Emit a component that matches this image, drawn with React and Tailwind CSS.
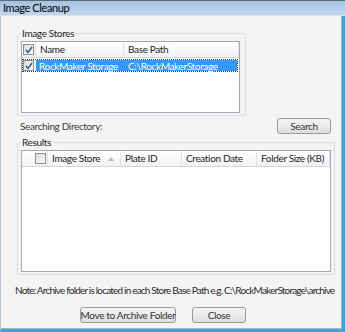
function CheckBox({ checked = false }) {
  return (
    <span className="flex h-[11px] w-[11px] shrink-0 items-center justify-center border border-[#8e8f8f] bg-gradient-to-br from-[#dcdcdc] to-[#fbfbfb]">
      {checked && (
        <svg width="8" height="8" viewBox="0 0 8 8">
          <path d="M1 4 L3 6.5 L7 1" fill="none" stroke="#3e5b96" strokeWidth="1.6" />
        </svg>
      )}
    </span>
  );
}

function HeaderCell({ width, children, last = false }) {
  return (
    <div
      className={`flex h-full items-center whitespace-nowrap pl-[4px] ${last ? '' : 'border-r border-[#dfe2e6]'}`}
      style={{ width }}
    >
      {children}
    </div>
  );
}

function Group({ label, className, children }) {
  return (
    <div className={`relative rounded-[3px] border border-[#d5dfe5] ${className}`}>
      <span className="absolute -top-[7px] left-[3px] bg-[#f4f4f4] px-[1px] leading-[12px]">
        {label}
      </span>
      {children}
    </div>
  );
}

function Button({ width, children }) {
  return (
    <button
      type="button"
      className="flex h-[16px] items-center justify-center whitespace-nowrap rounded-[3px] border border-[#9a9a9a] bg-gradient-to-b from-[#f4f4f4] via-[#ececec] to-[#dcdcdc] leading-[12px] text-[#333]"
      style={{ width }}
    >
      {children}
    </button>
  );
}

export default function App() {
  return (
    <div className="flex h-[332px] w-[345px] flex-col overflow-hidden border-t border-[#5f6a74] bg-[#f4f4f4] font-[Lato,sans-serif] text-[10px] tracking-[-0.35px] text-[#1e1e1e]">
      {/* Title bar */}
      <div className="flex h-[15px] shrink-0 items-center border-b border-[#d6e4f3] bg-gradient-to-b from-[#a5c2e2] to-[#c2d6ec] pl-[3px] text-[11px] tracking-[-0.4px] text-black">
        Image Cleanup
      </div>

      {/* Window body */}
      <div className="flex flex-1 border-b-[3px] border-l border-r-[3px] border-b-[#3aa4d6] border-l-[#b4c4d6] border-r-[#3aa4d6]">
        <div className="flex flex-1 flex-col border-b border-r border-[#a9b4bf]">
          {/* Image Stores */}
          <Group label="Image Stores" className="ml-[16px] mt-[17px] h-[83px] w-[229px]">
            <div className="ml-[3px] mt-[7px] flex h-[72px] w-[219px] flex-col border border-[#a3a9b1] bg-white">
              <div className="flex h-[16px] shrink-0 items-center border-b border-[#d5d5d5] bg-gradient-to-b from-white to-[#f1f2f4]">
                <div className="flex h-full w-[14px] items-center border-r border-[#dfe2e6] pl-[1px]">
                  <CheckBox checked />
                </div>
                <HeaderCell width={88}>Name</HeaderCell>
                <HeaderCell width={115}>Base Path</HeaderCell>
              </div>
              <div className="mt-[1px] flex h-[13px] w-[216px] items-center border border-dotted border-[#3a3a3a]">
                <div className="flex h-full w-[13px] items-center bg-white">
                  <CheckBox checked />
                </div>
                <div className="flex h-full flex-1 items-center whitespace-nowrap bg-[#3399ff] text-white">
                  <span className="w-[89px] pl-[3px] leading-[12px]">RockMaker Storage</span>
                  <span className="pl-[3px] leading-[12px]">C:\RockMakerStorage</span>
                </div>
              </div>
            </div>
          </Group>

          {/* Searching directory */}
          <div className="ml-[19px] mt-[2px] flex h-[16px] w-[311px] items-center justify-between">
            <span className="leading-[12px] text-[#3b3b3b]">Searching Directory:</span>
            <Button width={54}>Search</Button>
          </div>

          {/* Results */}
          <Group label="Results" className="ml-[16px] mt-[8px] h-[133px] w-[318px]">
            <div className="ml-[3px] mt-[7px] flex h-[122px] w-[310px] flex-col border border-[#a3a9b1] bg-white">
              <div className="flex h-[16px] shrink-0 items-center border-b border-[#d5d5d5] bg-gradient-to-b from-white to-[#f1f2f4]">
                <div className="flex h-full w-[26px] items-center border-r border-[#dfe2e6] pl-[13px]">
                  <CheckBox />
                </div>
                <HeaderCell width={73}>
                  <span className="flex-1">Image Store</span>
                  <svg width="6" height="4" viewBox="0 0 6 4" className="mr-[6px]">
                    <path d="M0 4 L3 0 L6 4 Z" fill="#b4bac2" />
                  </svg>
                </HeaderCell>
                <HeaderCell width={61}>Plate ID</HeaderCell>
                <HeaderCell width={75}>Creation Date</HeaderCell>
                <HeaderCell width={73}>Folder Size (KB)</HeaderCell>
              </div>
            </div>
          </Group>

          {/* Note */}
          <div className="ml-[14px] mt-[9px] whitespace-nowrap leading-[12px] tracking-[-0.8px] text-[#2b2b2b]">
            Note: Archive folder is located in each Store Base Path e.g. C:\RockMakerStorage\archive
          </div>

          {/* Buttons */}
          <div className="ml-[79px] mt-[11px] flex gap-[16px]">
            <Button width={96}>Move to Archive Folder</Button>
            <Button width={54}>Close</Button>
          </div>
        </div>
      </div>
    </div>
  );
}
